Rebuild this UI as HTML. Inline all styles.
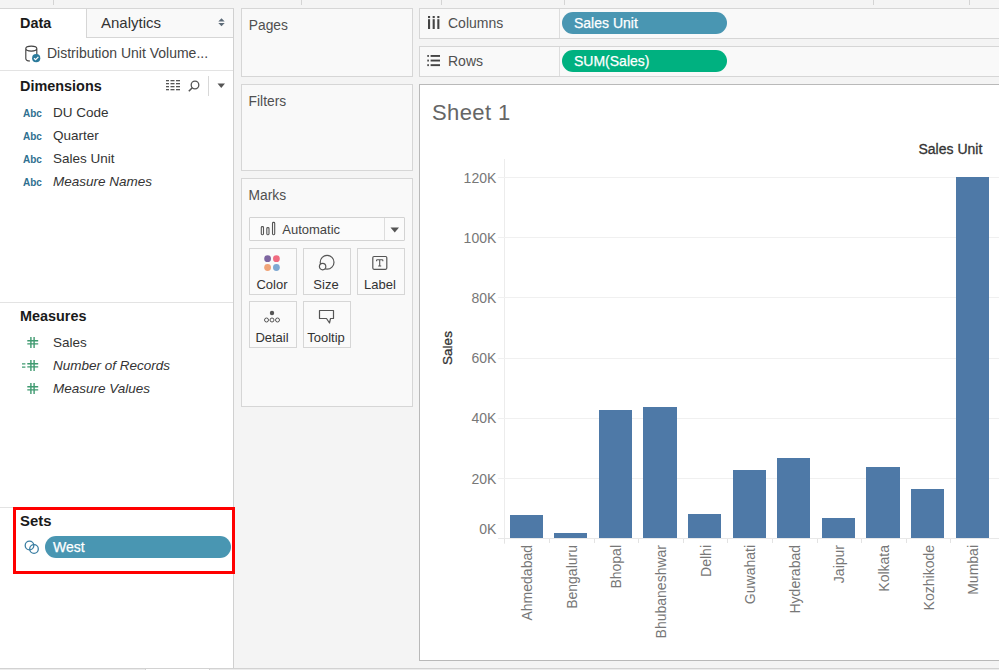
<!DOCTYPE html>
<html><head><meta charset="utf-8"><style>
html,body{margin:0;padding:0;}
body{width:999px;height:670px;position:relative;overflow:hidden;background:#f4f4f4;font-family:"Liberation Sans",sans-serif;}
.t{position:absolute;white-space:nowrap;line-height:1;}
.r{position:absolute;}
svg.r{overflow:visible;}
</style></head><body>
<div class="r" style="left:53px;top:0px;width:1px;height:5px;background:#d4d4d4;"></div>
<div class="r" style="left:301px;top:0px;width:1px;height:5px;background:#d4d4d4;"></div>
<div class="r" style="left:441px;top:0px;width:1px;height:5px;background:#d4d4d4;"></div>
<div class="r" style="left:564px;top:0px;width:1px;height:5px;background:#d4d4d4;"></div>
<div class="r" style="left:873px;top:0px;width:1px;height:5px;background:#d4d4d4;"></div>
<div class="r" style="left:969px;top:0px;width:1px;height:5px;background:#d4d4d4;"></div>
<div class="r" style="left:0px;top:8px;width:234px;height:662px;background:#ffffff;border-top:1px solid #d6d6d6;border-right:1px solid #d0d0d0;box-sizing:border-box;"></div>
<div class="r" style="left:86px;top:8px;width:147px;height:30px;background:#f9f9f9;box-sizing:border-box;border-left:1px solid #d6d6d6;border-bottom:1px solid #d6d6d6;border-top:1px solid #d6d6d6;"></div>
<div class="t" style="left:20.2px;top:14.78px;font-size:15.5px;color:#1a1a1a;font-weight:bold;font-style:normal;transform:scaleX(0.93);transform-origin:0 0;">Data</div>
<div class="t" style="left:101px;top:15.30px;font-size:15px;color:#333;font-weight:normal;font-style:normal;">Analytics</div>
<svg class="r" style="left:217.8px;top:18px" width="8" height="9"><path d="M0.3 3.4 L3.5 0.2 L6.7 3.4Z M0.3 5 L3.5 8.3 L6.7 5Z" fill="#5d6b78"/></svg>
<svg class="r" style="left:23px;top:44px" width="18" height="20" viewBox="0 0 18 20">
<path d="M2.8 4.6 C2.8 1.2 13.8 1.2 13.8 4.6 L13.8 12.3 M2.8 4.6 C2.8 8 13.8 8 13.8 4.6 M2.8 4.6 L2.8 14.5 C2.8 16.3 5 17 7 17" fill="none" stroke="#444" stroke-width="1.15"/>
<circle cx="13.2" cy="14.2" r="4.1" fill="#2b7a9b"/>
<path d="M11 14.2 L12.6 15.7 L15.4 12.8" fill="none" stroke="#fff" stroke-width="1.2"/>
</svg>
<div class="t" style="left:47px;top:46.15px;font-size:14px;color:#444;font-weight:normal;font-style:normal;">Distribution Unit Volume...</div>
<div class="r" style="left:0px;top:70px;width:233px;height:1px;background:#e3e3e3;"></div>
<div class="t" style="left:19.8px;top:78.18px;font-size:15.5px;color:#1a1a1a;font-weight:bold;font-style:normal;transform:scaleX(0.93);transform-origin:0 0;">Dimensions</div>
<svg class="r" style="left:166px;top:80px" width="14" height="11" viewBox="0 0 14 11">
<g fill="#555">
<rect x="0" y="0" width="3" height="1.3"/><rect x="4.5" y="0" width="4" height="1.3"/><rect x="10" y="0" width="4" height="1.3"/>
<rect x="0" y="3" width="3" height="1.3"/><rect x="4.5" y="3" width="4" height="1.3"/><rect x="10" y="3" width="4" height="1.3"/>
<rect x="0" y="6" width="3" height="1.3"/><rect x="4.5" y="6" width="4" height="1.3"/><rect x="10" y="6" width="4" height="1.3"/>
<rect x="0" y="9" width="3" height="1.3"/><rect x="4.5" y="9" width="4" height="1.3"/><rect x="10" y="9" width="4" height="1.3"/>
</g></svg>
<svg class="r" style="left:188px;top:80px" width="12" height="12" viewBox="0 0 12 12">
<circle cx="7" cy="5" r="3.8" fill="none" stroke="#555" stroke-width="1.3"/><path d="M4.3 7.7 L0.8 11.2" stroke="#555" stroke-width="1.5"/></svg>
<div class="r" style="left:208px;top:76px;width:1px;height:20px;background:#d8d8d8;"></div>
<svg class="r" style="left:217px;top:83px" width="9" height="6"><path d="M0.5 0.5 L8 0.5 L4.25 5Z" fill="#555"/></svg>
<div class="t" style="left:23px;top:108.53px;font-size:10px;color:#2f7090;font-weight:bold;font-style:normal;">Abc</div>
<div class="t" style="left:53px;top:106.07px;font-size:13.5px;color:#333;font-weight:normal;font-style:normal;">DU Code</div>
<div class="t" style="left:23px;top:131.53px;font-size:10px;color:#2f7090;font-weight:bold;font-style:normal;">Abc</div>
<div class="t" style="left:53px;top:129.07px;font-size:13.5px;color:#333;font-weight:normal;font-style:normal;">Quarter</div>
<div class="t" style="left:23px;top:154.53px;font-size:10px;color:#2f7090;font-weight:bold;font-style:normal;">Abc</div>
<div class="t" style="left:53px;top:152.07px;font-size:13.5px;color:#333;font-weight:normal;font-style:normal;">Sales Unit</div>
<div class="t" style="left:23px;top:177.84px;font-size:10px;color:#2f7090;font-weight:bold;font-style:normal;">Abc</div>
<div class="t" style="left:53px;top:175.37px;font-size:13.5px;color:#333;font-weight:normal;font-style:italic;">Measure Names</div>
<div class="r" style="left:0px;top:302px;width:233px;height:1px;background:#e3e3e3;"></div>
<div class="t" style="left:20px;top:307.88px;font-size:15.5px;color:#1a1a1a;font-weight:bold;font-style:normal;transform:scaleX(0.93);transform-origin:0 0;">Measures</div>
<svg class="r" style="left:26.5px;top:336.7px" width="12" height="11" viewBox="0 0 12 11"><g stroke="#3f9a70" stroke-width="1.4" fill="none">
<path d="M3.9 0 L3.9 11 M7.1 0 L7.1 11 M0.3 3.7 L11.2 3.7 M0.3 6.9 L11.2 6.9"/></g></svg>
<div class="t" style="left:53px;top:335.77px;font-size:13.5px;color:#333;font-weight:normal;font-style:normal;">Sales</div>
<svg class="r" style="left:26.5px;top:359.7px" width="12" height="11" viewBox="0 0 12 11"><g stroke="#3f9a70" stroke-width="1.4" fill="none">
<path d="M3.9 0 L3.9 11 M7.1 0 L7.1 11 M0.3 3.7 L11.2 3.7 M0.3 6.9 L11.2 6.9"/></g></svg>
<svg class="r" style="left:22.2px;top:363.2px" width="4" height="5"><path d="M0 0.9 L3.4 0.9 M0 4.1 L3.4 4.1" stroke="#3f9a70" stroke-width="1.1"/></svg>
<div class="t" style="left:53px;top:358.77px;font-size:13.5px;color:#333;font-weight:normal;font-style:italic;">Number of Records</div>
<svg class="r" style="left:26.5px;top:382.8px" width="12" height="11" viewBox="0 0 12 11"><g stroke="#3f9a70" stroke-width="1.4" fill="none">
<path d="M3.9 0 L3.9 11 M7.1 0 L7.1 11 M0.3 3.7 L11.2 3.7 M0.3 6.9 L11.2 6.9"/></g></svg>
<div class="t" style="left:53px;top:381.87px;font-size:13.5px;color:#333;font-weight:normal;font-style:italic;">Measure Values</div>
<div class="r" style="left:0px;top:507px;width:233px;height:1px;background:#e3e3e3;"></div>
<div class="t" style="left:19.8px;top:512.88px;font-size:15.5px;color:#1a1a1a;font-weight:bold;font-style:normal;transform:scaleX(0.96);transform-origin:0 0;">Sets</div>
<svg class="r" style="left:24px;top:540px" width="16" height="15" viewBox="0 0 16 15"><g fill="none" stroke="#3c7fa3" stroke-width="1.3">
<circle cx="5.5" cy="5.5" r="4.3"/><circle cx="10" cy="9" r="4.3"/></g></svg>
<div class="r" style="left:44.5px;top:536px;width:186.5px;height:22px;background:#4996b2;border-radius:11px;"></div>
<div class="t" style="left:53px;top:539.95px;font-size:14px;color:#ffffff;font-weight:normal;font-style:normal;-webkit-text-stroke:0.25px #fff;">West</div>
<div class="r" style="left:13px;top:507px;width:222px;height:67px;background:none;box-sizing:border-box;border:3px solid #ff0000;"></div>
<div class="r" style="left:0px;top:668px;width:999px;height:1px;background:#d2d2d2;"></div>
<div class="r" style="left:0px;top:669px;width:999px;height:1px;background:#ececec;"></div>
<div class="r" style="left:145px;top:669px;width:63px;height:1px;background:#ffffff;border-left:1px solid #d2d2d2;border-right:1px solid #d2d2d2;"></div>
<div class="r" style="left:241px;top:8px;width:172px;height:69px;background:#f9f9f9;box-sizing:border-box;border:1px solid #d6d6d6;"></div>
<div class="t" style="left:248.8px;top:18.62px;font-size:13.8px;color:#505050;font-weight:normal;font-style:normal;">Pages</div>
<div class="r" style="left:241px;top:84px;width:172px;height:87px;background:#f9f9f9;box-sizing:border-box;border:1px solid #d6d6d6;"></div>
<div class="t" style="left:248.6px;top:94.72px;font-size:13.8px;color:#505050;font-weight:normal;font-style:normal;">Filters</div>
<div class="r" style="left:241px;top:178px;width:172px;height:229px;background:#f9f9f9;box-sizing:border-box;border:1px solid #d6d6d6;"></div>
<div class="t" style="left:248.6px;top:188.82px;font-size:13.8px;color:#505050;font-weight:normal;font-style:normal;">Marks</div>
<div class="r" style="left:249px;top:217px;width:156px;height:24px;background:#fbfbfb;box-sizing:border-box;border:1px solid #d3d3d3;border-radius:1px;"></div>
<div class="r" style="left:384px;top:218px;width:1px;height:22px;background:#dddddd;"></div>
<svg class="r" style="left:390px;top:227px" width="10" height="6"><path d="M0.5 0.5 L9 0.5 L4.75 5.5Z" fill="#555"/></svg>
<svg class="r" style="left:260px;top:221px" width="16" height="15" viewBox="0 0 16 15"><g fill="none" stroke="#555" stroke-width="1.1">
<rect x="1.3" y="5.6" width="2.2" height="8.1" rx="0.9"/><rect x="6.8" y="6.6" width="2.2" height="7.1" rx="0.9"/><rect x="12.5" y="1.4" width="2.2" height="12.3" rx="0.9"/></g></svg>
<div class="t" style="left:282.3px;top:223.00px;font-size:13px;color:#444;font-weight:normal;font-style:normal;">Automatic</div>
<div class="r" style="left:249px;top:248px;width:48px;height:47px;background:#fafafa;box-sizing:border-box;border:1px solid #d6d6d6;"></div>
<div class="t" style="left:248px;width:48px;text-align:center;top:277.70px;font-size:13px;color:#333">Color</div>
<svg class="r" style="left:262px;top:254px" width="20" height="20" viewBox="0 0 20 20">
<circle cx="5.6" cy="4.7" r="3.4" fill="#7d65a0"/><circle cx="14.4" cy="4.7" r="3.4" fill="#f06b80"/>
<circle cx="5.6" cy="13.5" r="3.4" fill="#f0a478"/><circle cx="14.4" cy="13.5" r="3.4" fill="#7ea8d2"/></svg>
<div class="r" style="left:303px;top:248px;width:48px;height:47px;background:#fafafa;box-sizing:border-box;border:1px solid #d6d6d6;"></div>
<div class="t" style="left:302px;width:48px;text-align:center;top:277.70px;font-size:13px;color:#333">Size</div>
<svg class="r" style="left:316px;top:254px" width="20" height="20" viewBox="0 0 20 20"><g fill="#fafafa" stroke="#555" stroke-width="1.2">
<circle cx="11.1" cy="8.3" r="6.9"/><circle cx="6.6" cy="12.6" r="3.2"/></g></svg>
<div class="r" style="left:357px;top:248px;width:48px;height:47px;background:#fafafa;box-sizing:border-box;border:1px solid #d6d6d6;"></div>
<div class="t" style="left:356px;width:48px;text-align:center;top:277.70px;font-size:13px;color:#333">Label</div>
<svg class="r" style="left:371px;top:255px" width="17" height="16" viewBox="0 0 17 16">
<rect x="1.8" y="1.5" width="14" height="12.8" rx="1.2" fill="none" stroke="#555" stroke-width="1.2"/>
<path d="M5.6 4.8 L11.8 4.8 M8.7 4.8 L8.7 11 M7.2 11 L10.2 11 M5.6 4.8 L5.6 6.3 M11.8 4.8 L11.8 6.3" stroke="#555" stroke-width="1.1" fill="none"/></svg>
<div class="r" style="left:249px;top:301px;width:48px;height:47px;background:#fafafa;box-sizing:border-box;border:1px solid #d6d6d6;"></div>
<div class="t" style="left:248px;width:48px;text-align:center;top:330.70px;font-size:13px;color:#333">Detail</div>
<svg class="r" style="left:262px;top:309.5px" width="20" height="14" viewBox="0 0 20 14">
<circle cx="10" cy="3" r="2.2" fill="#555"/>
<g fill="none" stroke="#555" stroke-width="1"><circle cx="4.5" cy="10" r="2"/><circle cx="10" cy="10" r="2"/><circle cx="15.5" cy="10" r="2"/></g></svg>
<div class="r" style="left:303px;top:301px;width:48px;height:47px;background:#fafafa;box-sizing:border-box;border:1px solid #d6d6d6;"></div>
<div class="t" style="left:302px;width:48px;text-align:center;top:330.70px;font-size:13px;color:#333">Tooltip</div>
<svg class="r" style="left:318px;top:309px" width="18" height="16" viewBox="0 0 18 16">
<path d="M1.5 1.5 L15.5 1.5 L15.5 9.5 L12.5 9.5 L11.5 14 L8.5 9.5 L1.5 9.5 Z" fill="none" stroke="#555" stroke-width="1.2" stroke-linejoin="round"/></svg>
<div class="r" style="left:419px;top:8px;width:586px;height:31px;background:#f9f9f9;box-sizing:border-box;border:1px solid #d6d6d6;"></div>
<div class="r" style="left:559px;top:9px;width:1px;height:29px;background:#dddddd;"></div>
<svg class="r" style="left:428px;top:16px" width="14" height="14" viewBox="0 0 14 14"><g fill="#444">
<rect x="0" y="0" width="2.1" height="2.1"/><rect x="4.65" y="0" width="2.1" height="2.1"/><rect x="9.3" y="0" width="2.1" height="2.1"/>
<rect x="0" y="3.2" width="2.1" height="9.8"/><rect x="4.65" y="3.2" width="2.1" height="9.8"/><rect x="9.3" y="3.2" width="2.1" height="9.8"/></g></svg>
<div class="t" style="left:448px;top:15.65px;font-size:14px;color:#505050;font-weight:normal;font-style:normal;">Columns</div>
<div class="r" style="left:562px;top:12px;width:165px;height:22px;background:#4996b2;border-radius:11px;"></div>
<div class="t" style="left:574px;top:16.15px;font-size:14px;color:#ffffff;font-weight:normal;font-style:normal;-webkit-text-stroke:0.25px #fff;">Sales Unit</div>
<div class="r" style="left:419px;top:46px;width:586px;height:31px;background:#f9f9f9;box-sizing:border-box;border:1px solid #d6d6d6;"></div>
<div class="r" style="left:559px;top:47px;width:1px;height:29px;background:#dddddd;"></div>
<svg class="r" style="left:427px;top:54.5px" width="14" height="12" viewBox="0 0 14 12"><g fill="#444">
<rect x="0.3" y="0" width="1.6" height="1.9"/><rect x="3.6" y="0" width="9.4" height="1.9"/>
<rect x="0.3" y="4.6" width="1.6" height="1.9"/><rect x="3.6" y="4.6" width="9.4" height="1.9"/>
<rect x="0.3" y="9.2" width="1.6" height="1.9"/><rect x="3.6" y="9.2" width="9.4" height="1.9"/></g></svg>
<div class="t" style="left:448px;top:53.65px;font-size:14px;color:#505050;font-weight:normal;font-style:normal;">Rows</div>
<div class="r" style="left:562px;top:50px;width:165px;height:22px;background:#00b180;border-radius:11px;"></div>
<div class="t" style="left:574px;top:54.15px;font-size:14px;color:#ffffff;font-weight:normal;font-style:normal;-webkit-text-stroke:0.25px #fff;">SUM(Sales)</div>
<div class="r" style="left:419px;top:84px;width:586px;height:577px;background:#ffffff;box-sizing:border-box;border:1px solid #b9b9b9;"></div>
<div class="t" style="left:432px;top:102.38px;font-size:22px;color:#666;font-weight:normal;font-style:normal;letter-spacing:0.4px;">Sheet 1</div>
<div class="t" style="left:918.5px;top:142.45px;font-size:14px;color:#333;font-weight:normal;font-style:normal;-webkit-text-stroke:0.3px #333;">Sales Unit</div>
<div class="r" style="left:504px;top:159px;width:1px;height:385px;background:#ececec;"></div>
<div class="t" style="right:502.7px;top:521.95px;font-size:14px;color:#777">0K</div>
<div class="r" style="left:498px;top:478px;width:501px;height:1px;background:#f0f0f0;"></div>
<div class="t" style="right:502.7px;top:471.65px;font-size:14px;color:#777">20K</div>
<div class="r" style="left:498px;top:418px;width:501px;height:1px;background:#f0f0f0;"></div>
<div class="t" style="right:502.7px;top:411.45px;font-size:14px;color:#777">40K</div>
<div class="r" style="left:498px;top:358px;width:501px;height:1px;background:#f0f0f0;"></div>
<div class="t" style="right:502.7px;top:351.25px;font-size:14px;color:#777">60K</div>
<div class="r" style="left:498px;top:297px;width:501px;height:1px;background:#f0f0f0;"></div>
<div class="t" style="right:502.7px;top:291.05px;font-size:14px;color:#777">80K</div>
<div class="r" style="left:498px;top:237px;width:501px;height:1px;background:#f0f0f0;"></div>
<div class="t" style="right:502.7px;top:230.85px;font-size:14px;color:#777">100K</div>
<div class="r" style="left:498px;top:177px;width:501px;height:1px;background:#f0f0f0;"></div>
<div class="t" style="right:502.7px;top:170.65px;font-size:14px;color:#777">120K</div>
<div class="r" style="left:498px;top:538px;width:501px;height:1px;background:#e8e8e8;"></div>
<div class="t" style="left:448px;top:348px;font-size:13.5px;color:#333;-webkit-text-stroke:0.3px #333;transform:translate(-50%,-50%) rotate(-90deg);">Sales</div>
<div class="r" style="left:509.60px;top:515px;width:33.3px;height:23.00px;background:#4e79a7"></div>
<div class="r" style="left:504px;top:539px;width:1px;height:4px;background:#e3e3e3;"></div>
<div class="t" style="left:527.25px;top:545px;font-size:14px;color:#777;transform-origin:0 0;transform:rotate(-90deg) translate(-100%,-50%);">Ahmedabad</div>
<div class="r" style="left:554.20px;top:533px;width:33.3px;height:5.00px;background:#4e79a7"></div>
<div class="r" style="left:549px;top:539px;width:1px;height:4px;background:#e3e3e3;"></div>
<div class="t" style="left:571.85px;top:545px;font-size:14px;color:#777;transform-origin:0 0;transform:rotate(-90deg) translate(-100%,-50%);">Bengaluru</div>
<div class="r" style="left:598.80px;top:410px;width:33.3px;height:128.00px;background:#4e79a7"></div>
<div class="r" style="left:594px;top:539px;width:1px;height:4px;background:#e3e3e3;"></div>
<div class="t" style="left:616.45px;top:545px;font-size:14px;color:#777;transform-origin:0 0;transform:rotate(-90deg) translate(-100%,-50%);">Bhopal</div>
<div class="r" style="left:643.40px;top:407px;width:33.3px;height:131.00px;background:#4e79a7"></div>
<div class="r" style="left:638px;top:539px;width:1px;height:4px;background:#e3e3e3;"></div>
<div class="t" style="left:661.05px;top:545px;font-size:14px;color:#777;transform-origin:0 0;transform:rotate(-90deg) translate(-100%,-50%);">Bhubaneshwar</div>
<div class="r" style="left:688.00px;top:514px;width:33.3px;height:24.00px;background:#4e79a7"></div>
<div class="r" style="left:683px;top:539px;width:1px;height:4px;background:#e3e3e3;"></div>
<div class="t" style="left:705.65px;top:545px;font-size:14px;color:#777;transform-origin:0 0;transform:rotate(-90deg) translate(-100%,-50%);">Delhi</div>
<div class="r" style="left:732.60px;top:470.2px;width:33.3px;height:67.80px;background:#4e79a7"></div>
<div class="r" style="left:727px;top:539px;width:1px;height:4px;background:#e3e3e3;"></div>
<div class="t" style="left:750.25px;top:545px;font-size:14px;color:#777;transform-origin:0 0;transform:rotate(-90deg) translate(-100%,-50%);">Guwahati</div>
<div class="r" style="left:777.20px;top:458px;width:33.3px;height:80.00px;background:#4e79a7"></div>
<div class="r" style="left:772px;top:539px;width:1px;height:4px;background:#e3e3e3;"></div>
<div class="t" style="left:794.85px;top:545px;font-size:14px;color:#777;transform-origin:0 0;transform:rotate(-90deg) translate(-100%,-50%);">Hyderabad</div>
<div class="r" style="left:821.80px;top:518px;width:33.3px;height:20.00px;background:#4e79a7"></div>
<div class="r" style="left:817px;top:539px;width:1px;height:4px;background:#e3e3e3;"></div>
<div class="t" style="left:839.45px;top:545px;font-size:14px;color:#777;transform-origin:0 0;transform:rotate(-90deg) translate(-100%,-50%);">Jaipur</div>
<div class="r" style="left:866.40px;top:467px;width:33.3px;height:71.00px;background:#4e79a7"></div>
<div class="r" style="left:861px;top:539px;width:1px;height:4px;background:#e3e3e3;"></div>
<div class="t" style="left:884.05px;top:545px;font-size:14px;color:#777;transform-origin:0 0;transform:rotate(-90deg) translate(-100%,-50%);">Kolkata</div>
<div class="r" style="left:911.00px;top:489.2px;width:33.3px;height:48.80px;background:#4e79a7"></div>
<div class="r" style="left:906px;top:539px;width:1px;height:4px;background:#e3e3e3;"></div>
<div class="t" style="left:928.65px;top:545px;font-size:14px;color:#777;transform-origin:0 0;transform:rotate(-90deg) translate(-100%,-50%);">Kozhikode</div>
<div class="r" style="left:955.60px;top:177.3px;width:33.3px;height:360.70px;background:#4e79a7"></div>
<div class="r" style="left:950px;top:539px;width:1px;height:4px;background:#e3e3e3;"></div>
<div class="t" style="left:973.25px;top:545px;font-size:14px;color:#777;transform-origin:0 0;transform:rotate(-90deg) translate(-100%,-50%);">Mumbai</div>
</body></html>
